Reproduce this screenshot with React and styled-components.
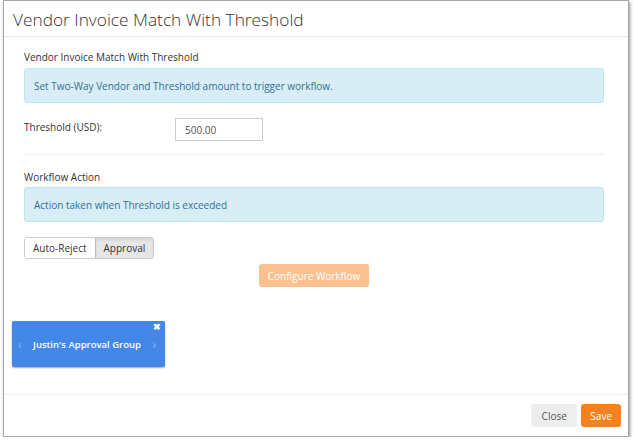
import React from "react"
import styled, { createGlobalStyle } from "styled-components"

const Global = createGlobalStyle`
  body {
    margin: 0;
    background: #fff;
    font-family: "Open Sans", "Liberation Sans", sans-serif;
    color: #333;
  }
`

const Modal = styled.div`
  box-sizing: border-box;
  width: 626px;
  height: 437px;
  margin-left: 3px;
  border: 1px solid #a8a8a8;
  background: #fff;
  box-shadow: 1px 2px 3px rgba(0, 0, 0, 0.45);
  display: flex;
  flex-direction: column;
`

const Header = styled.div`
  height: 36px;
  box-sizing: border-box;
  padding: 2px 9px 0;
  border-bottom: 1px solid #e8e8e8;
  font-size: 17.3px;
  font-weight: 300;
  color: #333;
  display: flex;
  align-items: center;
`

const Body = styled.div`
  flex: 1;
  padding: 12px 24px 0 20px;
`

const Heading = styled.div`
  font-size: 10px;
  color: #333;
  margin-bottom: ${p => p.$gap || "2px"};
  line-height: 16px;
`

const Alert = styled.div`
  background: #d9edf7;
  border: 1px solid #bce8f1;
  border-radius: 3px;
  color: #31708f;
  font-size: 10px;
  height: 35px;
  box-sizing: border-box;
  padding: 0 9px;
  display: flex;
  align-items: center;
`

const FieldRow = styled.div`
  display: flex;
  align-items: center;
  margin-top: 15px;
  font-size: 10px;
`

const Label = styled.div`
  width: 151px;
  align-self: flex-start;
  padding-top: 2px;
`

const Input = styled.div`
  width: 88px;
  height: 23px;
  box-sizing: border-box;
  border: 1px solid #ccc;
  color: #555;
  padding-left: 9px;
  display: flex;
  align-items: center;
  font-size: 10px;
`

const Rule = styled.hr`
  border: 0;
  border-top: 1px solid #eee;
  margin: 13px 0 14px;
`

const Group = styled.div`
  display: inline-flex;
  margin-top: 15px;
  border: 1px solid #ccc;
  border-radius: 3px;
  overflow: hidden;
`

const Toggle = styled.div`
  height: 20px;
  padding: 0 8px;
  display: flex;
  align-items: center;
  font-size: 10px;
  color: #333;
  background: ${p => (p.$active ? "#e6e6e6" : "#fff")};
  border-left: ${p => (p.$active ? "1px solid #bbb" : "0")};
  box-shadow: ${p => (p.$active ? "inset 0 2px 3px rgba(0,0,0,0.08)" : "none")};
`

const Center = styled.div`
  display: flex;
  justify-content: center;
  margin-top: 5px;
`

const Button = styled.div`
  height: 23px;
  box-sizing: border-box;
  padding: 0 ${p => p.$pad || "9px"};
  display: flex;
  align-items: center;
  border-radius: 3px;
  font-size: 10px;
  color: ${p => p.$color || "#fff"};
  background: ${p => p.$bg};
`

const Card = styled.div`
  position: relative;
  margin: 34px 0 0 -12px;
  width: 153px;
  height: 46px;
  background: #4388e7;
  border-radius: 2px;
  box-shadow: 0 1px 2px rgba(0, 0, 0, 0.35);
  display: flex;
  align-items: center;
  justify-content: space-between;
  padding: 0 9px 0 6px;
  box-sizing: border-box;
  color: #fff;
`

const CardName = styled.div`
  font-size: 9.5px;
  font-weight: 600;
`

const Arrow = styled.span`
  color: rgba(255, 255, 255, 0.4);
  font-size: 12px;
`

const CloseX = styled.span`
  position: absolute;
  top: 1px;
  right: 4px;
  font-size: 9px;
  font-weight: 700;
  color: #fff;
  line-height: 10px;
`

const Footer = styled.div`
  height: 41px;
  border-top: 1px solid #eee;
  display: flex;
  justify-content: flex-end;
  align-items: center;
  gap: 4px;
  padding: 0 7px 0 0;
`

export default function App() {
  return (
    <>
      <Global />
      <Modal>
        <Header>Vendor Invoice Match With Threshold</Header>
        <Body>
          <Heading $gap="3px">Vendor Invoice Match With Threshold</Heading>
          <Alert>Set Two-Way Vendor and Threshold amount to trigger workflow.</Alert>
          <FieldRow>
            <Label>Threshold (USD):</Label>
            <Input>500.00</Input>
          </FieldRow>
          <Rule />
          <Heading>Workflow Action</Heading>
          <Alert>Action taken when Threshold is exceeded</Alert>
          <Group>
            <Toggle>Auto-Reject</Toggle>
            <Toggle $active>Approval</Toggle>
          </Group>
          <Center>
            <Button $bg="#fbc08f">Configure Workflow</Button>
          </Center>
          <Card>
            <Arrow>‹</Arrow>
            <CardName>Justin's Approval Group</CardName>
            <Arrow>›</Arrow>
            <CloseX>✖</CloseX>
          </Card>
        </Body>
        <Footer>
          <Button $bg="#eee" $color="#555" $pad="10.5px">Close</Button>
          <Button $bg="#f58220">Save</Button>
        </Footer>
      </Modal>
    </>
  )
}
